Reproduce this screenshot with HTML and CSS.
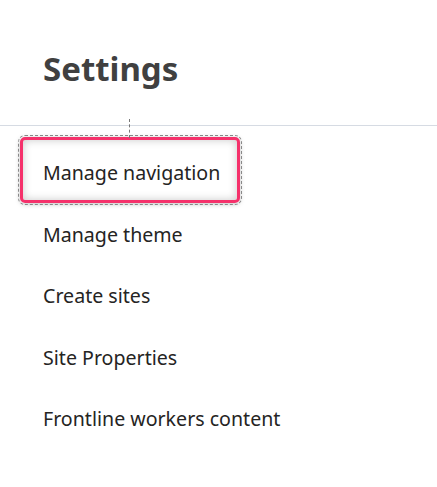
FILE: index.html
```html
<!DOCTYPE html>
<html lang="en">
<head>
    <meta charset="UTF-8">
    <meta name="viewport" content="width=device-width, initial-scale=1.0">
    <title>Settings</title>
    <link rel="stylesheet" href="styles.css">
</head>
<body>
    <div class="panel">
        <div class="panel-header">
            <h1>Settings</h1>
        </div>
        <ul class="settings-list">
            <li><a href="#" class="item selected">Manage navigation</a></li>
            <li><a href="#" class="item">Manage theme</a></li>
            <li><a href="#" class="item">Create sites</a></li>
            <li><a href="#" class="item">Site Properties</a></li>
            <li><a href="#" class="item">Frontline workers content</a></li>
        </ul>
    </div>
</body>
</html>
```

FILE: styles.css
```css
/* CSS */
body {
    margin: 0;
    background-color: #fff;
    font-family: "Noto Sans", "Open Sans", sans-serif;
    color: #252423;
}
.panel {
    position: relative;
    width: 437px;
}
.panel-header {
    position: relative;
    height: 125px;
    border-bottom: 1px solid #d6dbe3;
}
.panel-header h1 {
    margin: 0;
    padding: 46px 0 0 43px;
    font-size: 33px;
    font-weight: 700;
    line-height: 46px;
    color: #404040;
}
/* dashed guide from the selection */
.panel-header::after {
    content: "";
    position: absolute;
    left: 129px;
    top: 119px;
    height: 19px;
    border-left: 1px dashed #777;
}
.settings-list {
    list-style-type: none;
    margin: 0;
    padding: 13px 0 0 20px;
}
.settings-list li {
    height: 61.5px;
}
.item {
    display: inline-block;
    margin-top: -2px;
    padding: 6px 17px 0 20px;
    border: 3px solid transparent;
    border-radius: 5px;
    font-size: 19.6px;
    line-height: 54px;
    color: #252423;
    text-decoration: none;
}
.item.selected {
    border-color: #f5316b;
    box-shadow: inset 0 0 8px rgba(0, 0, 0, 0.22), 0 1px 5px rgba(0, 0, 0, 0.25);
    outline: 1px dashed #888;
    outline-offset: 1px;
}
```
